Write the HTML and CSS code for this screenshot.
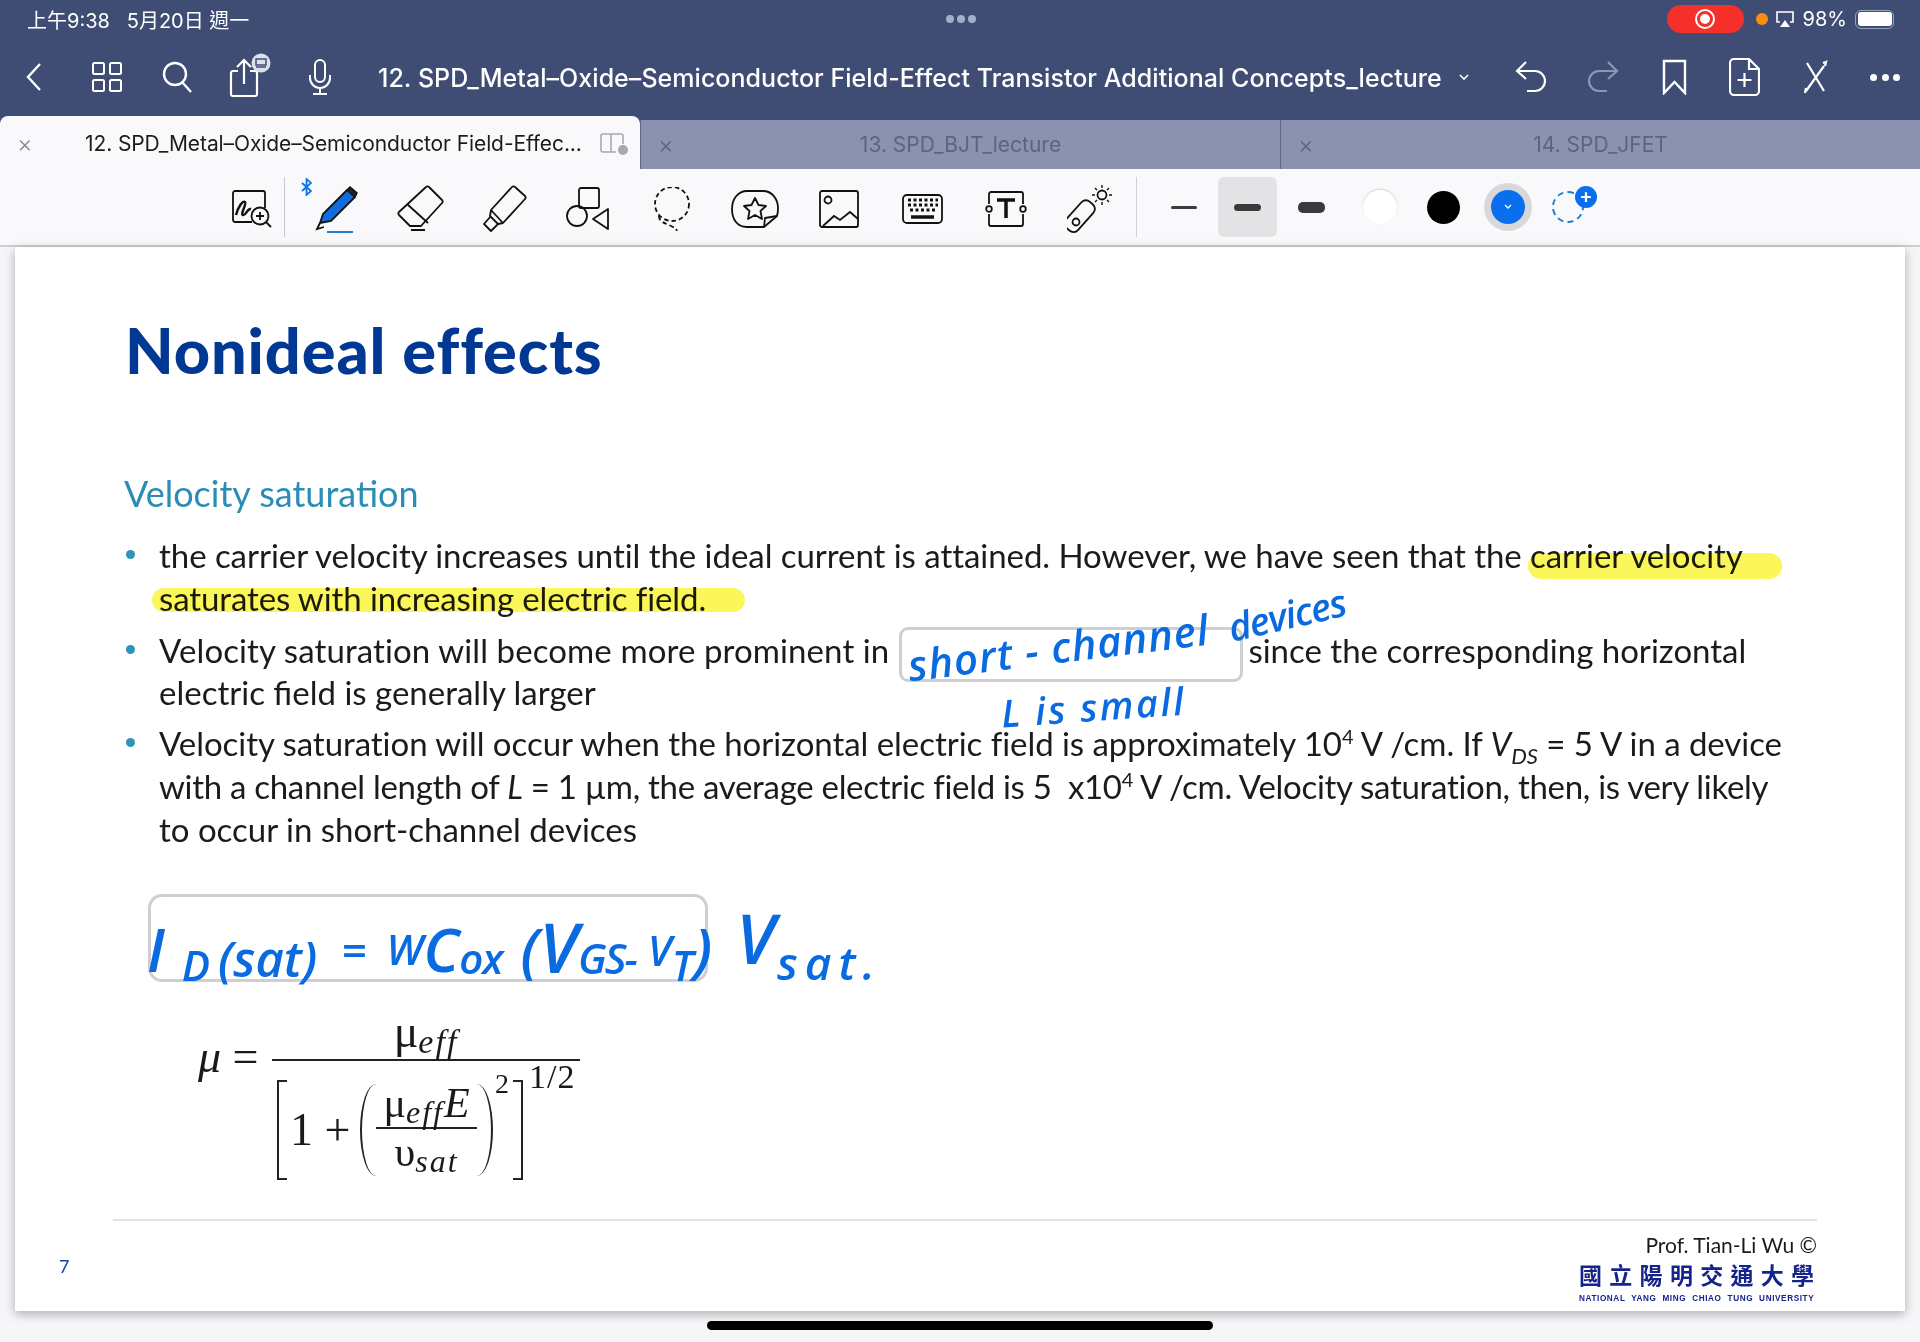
FILE: index.html
```html
<!DOCTYPE html>
<html lang="zh-Hant">
<head>
    <meta charset="UTF-8">
    <meta name="viewport" content="width=device-width, initial-scale=1.0">
    <title>Nonideal effects</title>
    <link rel="stylesheet" href="styles.css">
</head>
<body>
<div class="app">
    <header class="topbar">
        <div class="status">
            <div class="status-time">上午9:38&nbsp;&nbsp;&nbsp;5月20日 週一</div>
            <div class="status-dots"><i></i><i></i><i></i></div>
            <div class="status-right">
                <span class="rec"><i></i></span>
                <span class="orange-dot"></span>
                <svg class="airplay" width="20" height="18" viewBox="0 0 20 18"><path d="M5 12H2V2h16v10h-3" fill="none" stroke="#fff" stroke-width="1.6"/><path d="M10 10l5 7H5z" fill="#fff"/></svg>
                <span class="batt-num">98%</span>
                <span class="battery"><i></i></span>
            </div>
        </div>
        <nav class="nav">
            <svg class="nav-back" width="16" height="30" viewBox="0 0 16 30"><path d="M14 2L2 15l12 13" fill="none" stroke="#fff" stroke-width="2.4"/></svg>
            <svg class="nav-grid" width="30" height="30" viewBox="0 0 30 30" fill="none" stroke="#fff" stroke-width="2"><rect x="1" y="1" width="11" height="11" rx="1.5"/><rect x="18" y="1" width="11" height="11" rx="1.5"/><rect x="1" y="18" width="11" height="11" rx="1.5"/><rect x="18" y="18" width="11" height="11" rx="1.5"/></svg>
            <svg class="nav-search" width="30" height="32" viewBox="0 0 30 32" fill="none" stroke="#fff" stroke-width="2.4"><circle cx="13" cy="13" r="11"/><path d="M20.5 21.5L29 31"/></svg>
            <svg class="nav-share" width="42" height="44" viewBox="0 0 42 44"><path d="M8 17H3a2 2 0 0 0-2 2v21a2 2 0 0 0 2 2h22a2 2 0 0 0 2-2V19a2 2 0 0 0-2-2h-5M14 30V7M7 13l7-7 7 7" fill="none" stroke="#fff" stroke-width="2.2" transform="translate(1 1)"/><circle cx="32" cy="10" r="9.5" fill="#dfe1e8"/><rect x="27" y="6" width="10" height="6" fill="none" stroke="#3f4d75" stroke-width="1.5"/><path d="M27 14h10" stroke="#3f4d75" stroke-width="1.5"/></svg>
            <svg class="nav-mic" width="24" height="36" viewBox="0 0 24 36" fill="none" stroke="#fff" stroke-width="2"><rect x="7" y="1" width="10" height="22" rx="5"/><path d="M2 16v3a10 10 0 0 0 20 0v-3M12 29v5M5 35h14"/></svg>
            <div class="nav-title">12. SPD_Metal–Oxide–Semiconductor Field-Effect Transistor Additional Concepts_lecture</div>
            <svg class="nav-caret" width="10" height="7" viewBox="0 0 10 7"><path d="M1 1l4 4 4-4" fill="none" stroke="#fff" stroke-width="1.6"/></svg>
            <div class="nav-right">
                <svg width="31" height="32" viewBox="0 0 31 32" fill="none" stroke="#fff" stroke-width="2.2"><path d="M11 1L2 10l9 8M2 10h18a9 9 0 0 1 0 20h-8"/></svg>
                <svg width="31" height="32" viewBox="0 0 31 32" fill="none" stroke="#8d96b2" stroke-width="2.2"><path d="M20 1l9 9-9 8M29 10H11a9 9 0 0 0 0 20h8"/></svg>
                <svg width="25" height="36" viewBox="0 0 25 36" fill="none" stroke="#fff" stroke-width="2.4"><path d="M2 2h21v32l-10.500-11L2 34z"/></svg>
                <svg width="31" height="38" viewBox="0 0 31 38" fill="none" stroke="#fff" stroke-width="2.2"><path d="M20 1H5a4 4 0 0 0-4 4v28a4 4 0 0 0 4 4h21a4 4 0 0 0 4-4V11zM20 1v10h10M15.500 15v14M8.500 22h14"/></svg>
                <svg width="25" height="34" viewBox="0 0 25 34" fill="none" stroke="#fff" stroke-width="2.2"><path d="M4 3l17 28M21 6L3 31M2 33l1-5M20 3l3-1-1 4"/></svg>
                <div class="nav-more"><i></i><i></i><i></i></div>
            </div>
        </nav>
        <div class="tabs">
            <div class="tab tab-active">
                <span class="tab-x">×</span>
                <span class="tab-name">12. SPD_Metal–Oxide–Semiconductor Field-Effec...</span>
                <svg width="28" height="22" viewBox="0 0 28 22"><path d="M16 19H3a2 2 0 0 1-2-2V3a2 2 0 0 1 2-2h18a2 2 0 0 1 2 2v8M11 1v18" fill="none" stroke="#a8a8ae" stroke-width="1.6"/><circle cx="23" cy="17" r="5" fill="#a8a8ae"/></svg>
            </div>
            <div class="tab"><span class="tab-x">×</span><span class="tab-name">13. SPD_BJT_lecture</span></div>
            <div class="tab"><span class="tab-x">×</span><span class="tab-name">14. SPD_JFET</span></div>
        </div>
    </header>

    <div class="toolbar">
        <div class="tool tool-first">
            <svg width="40" height="38" viewBox="0 0 40 38" fill="none" stroke="#111" stroke-width="1.8"><path d="M20 32H3a2 2 0 0 1-2-2V3a2 2 0 0 1 2-2h28a2 2 0 0 1 2 2v15"/><path d="M4 25c2-8 7-15 9-13s-5 12-2 13 4-7 8-6" stroke-width="2.4"/><circle cx="28" cy="26" r="8.500"/><path d="M34 32l5 5M28 22v8M24 26h8"/></svg>
        </div>
        <div class="tool tool-pen">
            <svg class="bt" width="11" height="18" viewBox="0 0 11 18" fill="none" stroke="#0a74e8" stroke-width="1.8"><path d="M1 5l9 8-4.500 4V1L10 5l-9 8"/></svg>
            <svg width="44" height="48" viewBox="0 0 44 48"><path d="M5 37l3-9L32 4l8 7-24 24z" fill="#0f6de0" stroke="#111" stroke-width="1.800"/><path d="M32 4l3-3 7 6-2 4" fill="#222" stroke="#111" stroke-width="1.500"/><path d="M5 37l-3 6 7-2" fill="none" stroke="#111" stroke-width="1.800"/><path d="M12 46h26" stroke="#1f7fd4" stroke-width="2"/></svg>
        </div>
        <div class="tool">
            <svg width="47" height="48" viewBox="0 0 47 48" fill="none" stroke="#111" stroke-width="1.800"><path d="M32 2l13 13a2 2 0 0 1 0 3L24 41H13L2 30a2 2 0 0 1 0-3L29 2a2 2 0 0 1 3 0z" stroke-linejoin="round"/><path d="M10 19l21 19M14 45h14"/></svg>
        </div>
        <div class="tool">
            <svg width="45" height="48" viewBox="0 0 45 48" fill="none" stroke="#111" stroke-width="1.800" stroke-linejoin="round"><path d="M33 2l10 9a2 2 0 0 1 0 3L21 38l-5 1-8-8 1-6L30 2a2 2 0 0 1 3 0zM9 25l12 13M9 31l-7 8 7 7 7-7"/></svg>
        </div>
        <div class="tool">
            <svg width="44" height="44" viewBox="0 0 44 44" fill="none" stroke="#111" stroke-width="1.800"><rect x="13" y="1" width="20" height="20" rx="2"/><circle cx="11" cy="29" r="10"/><path d="M42 22v20L27 32z" stroke-linejoin="round"/></svg>
        </div>
        <div class="tool">
            <svg width="40" height="44" viewBox="0 0 40 44" fill="none" stroke="#111" stroke-width="1.800" stroke-dasharray="4.500 3"><circle cx="20" cy="17" r="17"/><path d="M7 29c0 6 6 7 12 10s5 3 6 5"/></svg>
        </div>
        <div class="tool">
            <svg width="48" height="38" viewBox="0 0 48 38" fill="none" stroke="#111" stroke-width="1.800" stroke-linejoin="round"><path d="M33 37H16C6 37 1 29 1 19S7 1 16 1h16c9 0 15 8 15 17 0 3 0 5-1 8L33 37z"/><path d="M33 37l1-9 12-2"/><path d="M24 8l3.500 7 7.500 1-5.500 5 1.500 8-7-4-7 4 1.500-8L13 16l7.500-1z"/></svg>
        </div>
        <div class="tool">
            <svg width="40" height="38" viewBox="0 0 40 38" fill="none" stroke="#111" stroke-width="1.800"><rect x="1" y="1" width="38" height="36" rx="2"/><circle cx="9" cy="10" r="3.500"/><path d="M4 36l11-10 6 4 10-8 8 7"/></svg>
        </div>
        <div class="tool">
            <svg width="41" height="30" viewBox="0 0 41 30"><rect x="1" y="1" width="39" height="28" rx="4" fill="none" stroke="#111" stroke-width="1.800"/><path d="M6 6h30M6 11h30M8 16h26" stroke="#111" stroke-width="3" stroke-dasharray="3 2.500"/><path d="M9 23h23" stroke="#111" stroke-width="3.500"/></svg>
        </div>
        <div class="tool">
            <svg width="42" height="36" viewBox="0 0 42 36" fill="none" stroke="#111" stroke-width="1.800"><path d="M4 13V3a2 2 0 0 1 2-2h30a2 2 0 0 1 2 2v10M4 23v10a2 2 0 0 0 2 2h30a2 2 0 0 0 2-2V23"/><circle cx="4" cy="18" r="2.800"/><circle cx="38" cy="18" r="2.800"/><path d="M12 9h18M21 9v18" stroke-width="3.500"/></svg>
        </div>
        <div class="tool">
            <svg width="46" height="48" viewBox="0 0 46 48" fill="none" stroke="#111" stroke-width="1.800"><rect x="-3" y="-7" width="16" height="35" rx="6" transform="translate(16 20) rotate(42)"/><circle cx="9" cy="37" r="3.500"/><circle cx="35" cy="10" r="4.500"/><path d="M35 0v3M35 17v3M25 10h3M42 10h3M28 3l2 2M40 15l2 2M42 3l-2 2M28 17l2-2" stroke-width="1.400"/></svg>
        </div>
        <div class="brush">
            <div class="brush-slot"><i class="line line-s"></i></div>
            <div class="brush-slot brush-on"><i class="line line-m"></i></div>
            <div class="brush-slot"><i class="line line-l"></i></div>
            <div class="brush-slot slot-shift"><i class="swatch swatch-white"></i></div>
            <div class="brush-slot"><i class="swatch swatch-black"></i></div>
            <div class="brush-slot"><i class="swatch swatch-blue">
                <svg width="8" height="6" viewBox="0 0 8 6"><path d="M1 1l3 3 3-3" fill="none" stroke="#fff" stroke-width="1.300"/></svg>
            </i></div>
            <div class="brush-slot slot-back"><i class="swatch-add"><b>+</b></i></div>
        </div>
    </div>

    <main class="doc">
        <section class="slide">
            <h1 class="slide-title">Nonideal effects</h1>
            <h2 class="slide-sub">Velocity saturation</h2>
            <ul class="points">
                <li><span class="snug">the carrier velocity increases until the ideal current is attained. However, we have seen that the carrier velocity</span><br><span class="tight">saturates with increasing electric field.</span></li>
                <li><span class="wider">Velocity saturation will become more prominent in</span><span class="gap"></span><span>since the corresponding horizontal</span><br><span>electric field is generally larger</span></li>
                <li><span class="snug">Velocity saturation will occur when the horizontal electric field is approximately 10<sup>4</sup> V /cm. If <em>V<sub>DS</sub></em> = 5 V in a device</span><br><span class="tighter">with a channel length of <em>L</em> = 1 µm, the average electric field is 5&nbsp;&nbsp;x10<sup>4</sup> V /cm. Velocity saturation, then, is very likely</span><br><span>to occur in short-channel devices</span></li>
            </ul>

            <div class="formula">
                <span class="f-left"><em>μ</em> =</span>
                <div class="frac">
                    <div class="frac-top">μ<em class="f-sub">eff</em></div>
                    <div class="frac-bot">
                        <i class="sq sq-l"></i>
                        <span class="f-one">1 +</span>
                        <i class="par par-l"></i>
                        <div class="inner">
                            <div class="inner-top">μ<em class="f-sub">eff</em><em>E</em></div>
                            <div class="inner-bot">υ<em class="f-sub">sat</em></div>
                        </div>
                        <i class="par par-r"></i>
                        <span class="f-two">2</span>
                        <i class="sq sq-r"></i>
                    </div>
                </div>
                <span class="f-half">1/2</span>
            </div>

            <footer class="slide-foot">
                <span class="page-no">7</span>
                <div class="credit">
                    <div class="prof">Prof. Tian-Li Wu ©</div>
                    <div class="nycu-zh">國立陽明交通大學</div>
                    <div class="nycu-en">NATIONAL YANG MING CHIAO TUNG UNIVERSITY</div>
                </div>
            </footer>

            <!-- annotations drawn on top of the slide -->
            <i class="hl hl-1"></i>
            <i class="hl hl-2"></i>
            <i class="box box-1"></i>
            <i class="box box-2"></i>
            <span class="ink ink-short">short - channel</span>
            <span class="ink ink-dev">devices</span>
            <span class="ink ink-small">L is small</span>
            <div class="ink ink-eq">
                <span class="big e-i">I</span><span class="low">D</span><span class="mid e-sat">(sat)</span>
                <span class="big e-eq">=</span>
                <span class="big e-w">W</span><span class="big">C</span><span class="mid e-ox">ox</span>
                <span class="big e-par">(</span><span class="tall">V</span><span class="mid e-gs">GS</span>
                <span class="mid">-</span><span class="big v2">V</span><span class="low">T</span><span class="big">)</span>
                <span class="tall v3">V</span><span class="mid sat">sat.</span>
            </div>
        </section>
    </main>

    <div class="home"><i></i></div>
</div>
</body>
</html>
```

FILE: styles.css
```css
* {
    box-sizing: border-box;
}
html, body {
    margin: 0;
    padding: 0;
}
body {
    width: 1920px;
    height: 1342px;
    overflow: hidden;
    background-color: #f6f5f8;
    font-family: Inter, "Noto Sans CJK TC", sans-serif;
}
.app {
    display: flex;
    flex-direction: column;
    height: 1342px;
}
i {
    font-style: normal;
    display: block;
}

/* top bar */
.topbar {
    background-color: #3f4d75;
    color: #fff;
}
.status {
    height: 38px;
    display: grid;
    grid-template-columns: 1fr auto 1fr;
    align-items: center;
    padding: 0 26px 0 27px;
}
.status-time {
    font-size: 20px;
}
.status-dots {
    display: flex;
    gap: 3px;
}
.status-dots i {
    width: 8px;
    height: 8px;
    border-radius: 50%;
    background-color: #a4aecb;
}
.status-right {
    display: flex;
    align-items: center;
    justify-content: flex-end;
}
.rec {
    width: 77px;
    height: 28px;
    border-radius: 14px;
    background-color: #f5302a;
    display: flex;
    align-items: center;
    justify-content: center;
}
.rec i {
    width: 20px;
    height: 20px;
    border-radius: 50%;
    background-color: #fff;
    border: 5px solid #f5302a;
    outline: 2px solid #fff;
    outline-offset: -2px;
    box-shadow: inset 0 0 0 1px #fff;
}
.orange-dot {
    width: 12px;
    height: 12px;
    border-radius: 50%;
    background-color: #fb8c0c;
    margin-left: 12px;
}
.airplay {
    margin-left: 7px;
}
.batt-num {
    font-size: 20px;
    margin-left: 8px;
}
.battery {
    width: 39px;
    height: 19px;
    margin-left: 8px;
    border: 1.5px solid #9aa3bd;
    border-radius: 6px;
    padding: 1.5px;
}
.battery i {
    height: 100%;
    background-color: #fff;
    border-radius: 3px;
}

.nav {
    height: 78px;
    display: flex;
    align-items: center;
    padding-left: 26px;
}
.nav-grid { margin-left: 50px; }
.nav-search { margin-left: 40px; }
.nav-share { margin-left: 37px; margin-top: -4px; }
.nav-mic { margin-left: 37px; }
.nav-title {
    margin: 2px 0 0 46px;
    font-size: 25px;
    font-weight: 500;
    white-space: nowrap;
    letter-spacing: 0.04px;
}
.nav-caret { margin-left: 17px; }
.nav-right {
    margin-left: auto;
    padding-right: 20px;
    display: flex;
    align-items: center;
    gap: 42.5px;
}
.nav-more {
    width: 30px;
    display: flex;
    justify-content: space-between;
}
.nav-more i {
    width: 7px;
    height: 7px;
    border-radius: 50%;
    background-color: #fff;
}

.tabs {
    height: 53px;
    display: flex;
    align-items: flex-end;
}
.tab {
    position: relative;
    flex: 0 0 640px;
    height: 49px;
    display: flex;
    align-items: center;
    justify-content: center;
    background-color: #8a92af;
    color: #5c6484;
    border-left: 1px solid #5f6a8c;
    font-size: 21px;
}
.tab-x {
    position: absolute;
    left: 17px;
    font-size: 24px;
    font-weight: 300;
    line-height: 1;
}
.tab-active {
    height: 53px;
    border-left: 0;
    border-radius: 8px 8px 0 0;
    background-color: #f9f9fb;
    color: #1c1c1c;
    justify-content: flex-start;
    padding: 2px 0 0 85px;
    white-space: nowrap;
    letter-spacing: -0.1px;
}
.tab-active .tab-x {
    color: #8c8c90;
}
.tab-active svg {
    margin-left: 18px;
}

/* tool row */
.toolbar {
    height: 78px;
    flex: none;
    display: flex;
    align-items: center;
    padding-left: 213px;
    background-color: #f9f9fb;
    border-bottom: 2px solid #cfcfd2;
}
.tool {
    position: relative;
    width: 83.7px;
    height: 60px;
    padding-top: 3px;
    display: flex;
    align-items: center;
    justify-content: center;
    flex: none;
}
.tool-first {
    width: 72px;
    padding-left: 6px;
    border-right: 1px solid #c9c9cc;
    margin-right: 10px;
}
.tool-pen svg:last-child {
    margin-top: 2px;
}
.bt {
    position: absolute;
    left: 6px;
    top: 1px;
}
.brush {
    display: flex;
    align-items: center;
    margin-left: 4px;
    padding-left: 15px;
    height: 60px;
    border-left: 1px solid #d2d2d5;
}
.brush-slot {
    width: 64px;
    height: 60px;
    display: flex;
    align-items: center;
    justify-content: center;
}
.brush-on {
    width: 59px;
    margin: 0 2.5px;
    border-radius: 6px;
    background-color: #e3e3e5;
}
.slot-shift {
    margin-left: 4px;
}
.slot-back {
    margin-left: -4px;
}
.line {
    background-color: #3a3a3c;
}
.line-s {
    width: 26px;
    height: 3px;
    border-radius: 2px;
}
.line-m {
    width: 27px;
    height: 7px;
    border-radius: 4px;
}
.line-l {
    width: 27px;
    height: 11px;
    border-radius: 5px;
}
.swatch {
    border-radius: 50%;
}
.swatch-white {
    width: 34px;
    height: 34px;
    background-color: #fff;
    box-shadow: 0 -1px 2px rgba(0, 0, 0, 0.15);
}
.swatch-black {
    width: 33px;
    height: 33px;
    background-color: #000;
}
.swatch-blue {
    width: 34px;
    height: 34px;
    background-color: #0a6fee;
    box-shadow: 0 0 0 7px #d8d8da;
    display: flex;
    align-items: center;
    justify-content: center;
}
.swatch-add {
    position: relative;
    width: 32px;
    height: 32px;
    border-radius: 50%;
    border: 2px dashed #1f7fd4;
}
.swatch-add b {
    position: absolute;
    right: -15px;
    top: -7px;
    width: 22px;
    height: 22px;
    border-radius: 50%;
    background-color: #0a6fee;
    color: #fff;
    font-size: 20px;
    line-height: 21px;
    font-weight: 600;
    text-align: center;
}

/* slide */
.doc {
    flex: none;
    padding: 0 15px;
    height: 1064px;
}
.slide {
    position: relative;
    height: 1064px;
    background-color: #fff;
    box-shadow: 0 3px 10px rgba(0, 0, 0, 0.3);
    padding: 0 98px;
    display: flex;
    flex-direction: column;
    font-family: Lato, sans-serif;
    color: #1b1b1b;
}
.slide-title {
    margin: 67px 0 0 12px;
    font-size: 63px;
    line-height: 72px;
    font-weight: 900;
    letter-spacing: 0.9px;
    color: #003893;
}
.slide-sub {
    margin: 85px 0 0 11px;
    font-size: 36px;
    line-height: 44px;
    font-weight: 400;
    color: #2a8db5;
}
.points {
    list-style: none;
    margin: 19px 0 0 0;
    padding: 0 0 0 46px;
    font-size: 33px;
    line-height: 43px;
    white-space: nowrap;
}
.points li {
    position: relative;
    margin-bottom: 9px;
}
.points li:nth-child(2) {
    line-height: 42px;
}
.points li::before {
    content: "";
    position: absolute;
    left: -33px;
    top: 16px;
    width: 9px;
    height: 9px;
    border-radius: 50%;
    background-color: #2e93b8;
}
.points sup {
    font-size: 20px;
    line-height: 0;
}
.points sub {
    font-size: 22px;
    line-height: 0;
}
.gap {
    display: inline-block;
    width: 359px;
}
.wider {
    letter-spacing: 0.1px;
}
.snug {
    letter-spacing: -0.05px;
}
.tight {
    letter-spacing: -0.1px;
}
.tighter {
    letter-spacing: -0.3px;
}

/* formula */
.formula {
    display: flex;
    align-items: flex-start;
    margin: 147px 0 0 85px;
    font-family: "Liberation Serif", serif;
    font-size: 46px;
    color: #1a1a1a;
}
.f-left {
    width: 74px;
    line-height: 50px;
    margin-top: 25px;
    white-space: nowrap;
}
.frac {
    width: 308px;
    flex: none;
}
.frac-top {
    text-align: center;
    border-bottom: 2px solid #222;
    height: 54px;
    line-height: 50px;
}
.f-sub {
    font-size: 34px;
    position: relative;
    top: 6px;
    letter-spacing: 2px;
}
.frac-bot {
    display: flex;
    align-items: center;
    height: 120px;
    padding: 17px 0 0 5px;
}
.sq {
    width: 10px;
    height: 100px;
    border: 2px solid #222;
    flex: none;
}
.sq-l {
    border-right: 0;
}
.sq-r {
    border-left: 0;
}
.f-one {
    margin-left: 3px;
    width: 70px;
    white-space: nowrap;
}
.par {
    width: 16px;
    height: 92px;
    border: 0 solid #222;
    flex: none;
}
.par-l {
    border-left-width: 2px;
    border-radius: 100% 0 0 100% / 50% 0 0 50%;
}
.par-r {
    border-right-width: 2px;
    border-radius: 0 100% 100% 0 / 0 50% 50% 0;
}
.inner {
    width: 101px;
    flex: none;
    text-align: center;
    font-size: 42px;
    white-space: nowrap;
}
.inner .f-sub {
    font-size: 32px;
    letter-spacing: 2px;
}
.inner-top {
    border-bottom: 2px solid #222;
    height: 46px;
    line-height: 40px;
}
.inner-bot {
    height: 48px;
    line-height: 46px;
}
.f-two {
    font-size: 28px;
    line-height: 32px;
    align-self: flex-start;
    width: 20px;
    margin-top: -10px;
    padding-left: 2px;
}
.f-half {
    font-size: 34px;
    line-height: 34px;
    letter-spacing: 1px;
    margin: 53px 0 0 -51px;
    white-space: nowrap;
}

/* footer of the slide */
.slide-foot {
    border-top: 2px solid #e3e3e3;
    display: flex;
    justify-content: space-between;
    position: absolute;
    left: 98px;
    right: 88px;
    bottom: 0;
    height: 92px;
}
.page-no {
    margin: 35px 0 0 -54px;
    font-size: 18px;
    line-height: 20px;
    color: #16479c;
}
.credit {
    width: 238px;
    margin-top: 11px;
}
.prof {
    text-align: right;
    font-size: 21px;
    line-height: 26px;
    white-space: nowrap;
}
.nycu-zh {
    font-family: "Noto Sans CJK TC", sans-serif;
    font-weight: 700;
    font-size: 23px;
    line-height: 28px;
    letter-spacing: 7.3px;
    color: #14248a;
    white-space: nowrap;
    margin-top: 2px;
}
.nycu-en {
    font-family: "Liberation Sans", sans-serif;
    font-weight: 700;
    font-size: 8.2px;
    line-height: 10px;
    letter-spacing: 0.6px;
    word-spacing: 3.1px;
    color: #14248a;
    white-space: nowrap;
    margin-top: 6px;
}

/* annotations */
.hl {
    position: absolute;
    background-color: #fbf65a;
    border-radius: 13px;
    mix-blend-mode: multiply;
}
.hl-1 {
    left: 1513px;
    top: 306px;
    width: 254px;
    height: 26px;
}
.hl-2 {
    left: 137px;
    top: 341px;
    width: 593px;
    height: 24px;
}
.box {
    position: absolute;
    border: 3px solid #cfcfd1;
    border-radius: 9px;
}
.box-1 {
    left: 884px;
    top: 380px;
    width: 344px;
    height: 55px;
}
.box-2 {
    left: 133px;
    top: 647px;
    width: 560px;
    height: 88px;
    border-radius: 14px;
}
.ink {
    position: absolute;
    color: #0a6ae0;
    font-family: "Open Sans", sans-serif;
    font-style: italic;
    font-weight: 600;
    white-space: nowrap;
    line-height: 1;
}
.ink-short {
    left: 892px;
    top: 379px;
    font-size: 42px;
    letter-spacing: 1px;
    transform: rotate(-7deg);
}
.ink-dev {
    left: 1212px;
    top: 348px;
    font-size: 38px;
    letter-spacing: -1px;
    transform: rotate(-13deg);
}
.ink-small {
    left: 986px;
    top: 440px;
    font-size: 38px;
    letter-spacing: 2.5px;
    transform: rotate(-4deg);
}
.ink-eq {
    left: 132px;
    top: 631px;
    height: 110px;
    display: flex;
    align-items: flex-end;
}
.big {
    font-size: 60px;
    line-height: 78px;
}
.tall {
    font-size: 68px;
    line-height: 82px;
}
.mid {
    font-size: 42px;
    line-height: 60px;
}
.low {
    font-size: 42px;
    line-height: 46px;
}
.e-i {
    margin-right: 17px;
}
.e-sat {
    margin-left: 8px;
    font-size: 49px;
}
.e-eq {
    margin-left: 24px;
    font-size: 44px;
}
.e-w {
    margin-left: 20px;
    font-size: 42px;
}
.e-ox {
    letter-spacing: -1px;
}
.e-par {
    margin-left: 18px;
}
.e-gs {
    letter-spacing: -2px;
}
.v2 {
    font-size: 42px;
    margin-left: 10px;
    line-height: 76px;
}
.v3 {
    margin-left: 24px;
    line-height: 100px;
}
.sat {
    margin-left: 2px;
    line-height: 52px;
    font-size: 46px;
    letter-spacing: 7px;
}

.home {
    flex: 1;
    display: flex;
    justify-content: center;
    padding-top: 10px;
}
.home i {
    width: 506px;
    height: 9px;
    border-radius: 5px;
    background-color: #000;
}
```
